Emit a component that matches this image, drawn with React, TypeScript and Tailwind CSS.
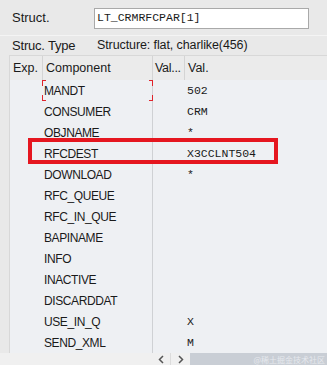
import React from "react";

const rows: [string, string][] = [
  ["MANDT", "502"],
  ["CONSUMER", "CRM"],
  ["OBJNAME", "*"],
  ["RFCDEST", "X3CCLNT504"],
  ["DOWNLOAD", "*"],
  ["RFC_QUEUE", ""],
  ["RFC_IN_QUE", ""],
  ["BAPINAME", ""],
  ["INFO", ""],
  ["INACTIVE", ""],
  ["DISCARDDAT", ""],
  ["USE_IN_Q", "X"],
  ["SEND_XML", "M"],
];

const sans = { fontFamily: '"Liberation Sans", Arial, sans-serif' };
const mono = { fontFamily: '"Liberation Mono", "Courier New", monospace' };

export default function App() {
  return (
    <div
      className="relative w-[327px] h-[365px] overflow-hidden bg-[#e9e9e9] text-[#1a1a1a]"
      style={sans}
    >
      {/* Struct row */}
      <div className="flex items-center h-[36px] pt-[1px] pl-[12px] border-b border-[#f4f4f4]">
        <div className="w-[82px] text-[13px]">Struct.</div>
        <div className="w-[215px] h-[21px] bg-white border border-[#a9a9a9] flex items-center pl-[2px] text-[11.5px]" style={mono}>
          LT_CRMRFCPAR[1]
        </div>
      </div>
      {/* Struc type row */}
      <div className="flex items-center h-[19px] pl-[12px] text-[13px]">
        <div className="w-[85px] tracking-[-0.2px]">Struc. Type</div>
        <div className="text-[12.5px] tracking-[-0.1px]">Structure: flat, charlike(456)</div>
      </div>
      {/* Table */}
      <div className="ml-[9px] border-l border-t border-[#d8d8d8]">
        {/* Header */}
        <div className="flex h-[24px] items-center text-[12.5px] bg-[#ebebeb]">
          <div className="w-[33px] pl-[3px] border-r border-[#d4d4d4] h-full flex items-center">Exp.</div>
          <div className="w-[110px] pl-[3px] border-r border-[#d4d4d4] h-full flex items-center">Component</div>
          <div className="w-[32px] pl-[2px] border-r border-[#d4d4d4] h-full flex items-center tracking-[-0.3px]">Val...</div>
          <div className="flex-1 pl-[3px] h-full flex items-center">Val.</div>
        </div>
        {/* Rows */}
        <div className="relative bg-[#eef0f3]">
          {rows.map(([c, v], i) => (
            <div key={c} className="flex h-[21px] items-center">
              <div className="w-[33px] h-full" />
              <div className="relative w-[110px] h-full flex items-center pl-[1px] text-[12px] tracking-[-0.4px] border-r border-[#cfd1d4]">
                {c}
                {i === 0 && (
                  <>
                    <span className="absolute left-[-1px] top-0 w-[4px] h-[6px] border-l border-t border-[#e0242c]" />
                    <span className="absolute right-[-1px] top-0 w-[4px] h-[6px] border-r border-t border-[#e0242c]" />
                    <span className="absolute left-[-1px] bottom-0 w-[4px] h-[6px] border-l border-b border-[#e0242c]" />
                    <span className="absolute right-[-1px] bottom-0 w-[4px] h-[6px] border-r border-b border-[#e0242c]" />
                  </>
                )}
              </div>
              <div className="w-[32px] h-full" />
              <div className="flex-1 pl-[2px] text-[11.5px]" style={mono}>
                {v}
              </div>
            </div>
          ))}
        </div>
      </div>
      {/* Bottom scroll strip */}
      <div className="flex h-[13px] items-center">
        <div className="w-[152px] h-full bg-[#f0f0f0]" />
        <div className="w-[19px] h-full flex items-center justify-center border-r border-[#dcdcdc] bg-[#f0f0f0]">
          <svg width="6" height="9" viewBox="0 0 6 9"><path d="M5 1 L1.5 4.5 L5 8" stroke="#555" strokeWidth="1.5" fill="none" /></svg>
        </div>
        <div className="w-[19px] h-full flex items-center justify-center bg-[#f0f0f0]">
          <svg width="6" height="9" viewBox="0 0 6 9"><path d="M1 1 L4.5 4.5 L1 8" stroke="#555" strokeWidth="1.5" fill="none" /></svg>
        </div>
        <div className="flex-1 h-full bg-[#c9ced5] flex items-center justify-end pr-[2px]">
          <span className="text-[8px] text-[#e6e9ee]" style={{ fontFamily: '"Noto Sans CJK SC", sans-serif' }}>@稀土掘金技术社区</span>
        </div>
      </div>
      {/* Red highlight box */}
      <div className="absolute left-[28px] top-[138px] w-[250px] h-[26px] border-[4px] border-[#e5161f]" />
    </div>
  );
}
